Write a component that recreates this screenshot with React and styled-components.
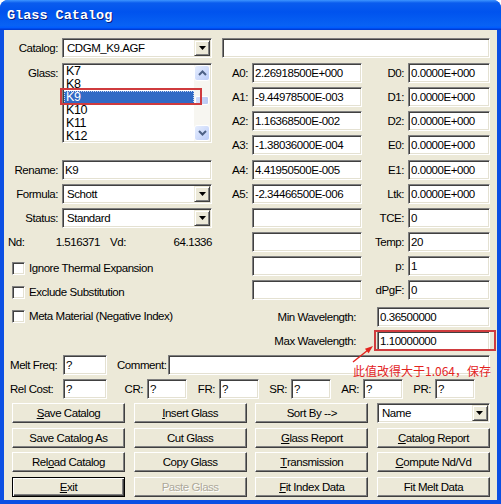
import React from "react";
import styled, { createGlobalStyle, css } from "styled-components";

const GlobalStyle = createGlobalStyle`
	html, body {
		margin: 0;
		padding: 0;
		background: #fff;
	}
	body {
		font-family: "Liberation Sans", Arial, sans-serif;
		font-size: 11.5px;
		letter-spacing: -0.45px;
		color: #000;
	}
`;

const sunken = css`
	box-sizing: border-box;
	background: #fff;
	border: 1px solid;
	border-color: #808080 #fff #fff #808080;
	box-shadow: inset 1px 1px #404040, inset -1px -1px #e4e1d2;
`;

const raised = css`
	box-sizing: border-box;
	background: #ece9d8;
	border: 1px solid;
	border-color: #fff #404040 #404040 #fff;
	box-shadow: inset -1px -1px #808080;
`;

const Window = styled.div`
	width: 501px;
	height: 504px;
	display: flex;
	flex-direction: column;
	background: #0b4fe3;
	border-radius: 8px 8px 0 0;
	overflow: hidden;
`;

const TitleBar = styled.div`
	height: 30px;
	flex: none;
	display: flex;
	align-items: center;
	padding-left: 7px;
	background: linear-gradient(
		180deg,
		#3d95ff 0%,
		#0a5cee 10%,
		#0053ee 40%,
		#0862f4 85%,
		#005bff 93%,
		#003dd7 97%,
		#003dd7 100%
	);
	color: #fff;
	font: bold 13.5px "Liberation Mono", monospace;
	letter-spacing: 0;
	text-shadow: 1px 1px 0 #0a1b7a;
`;

const Client = styled.div`
	position: relative;
	flex: 1;
	margin: 0 4px 4px;
	padding: 8px 3px 0 4px;
	background: #ece9d8;
	display: flex;
	flex-direction: column;
`;

const FormGrid = styled.div`
	display: grid;
	grid-template-columns: 50px 150px 32px 110px 38px 82px;
	grid-template-rows: 25px 24px 24px 24px 25px 24px 24px 24px 24px 24px 27px 24px 24px;
	column-gap: 4px;
	align-items: start;
`;

const FieldLabel = styled.div`
	grid-area: ${(p) => p.$at};
	text-align: right;
	line-height: 20px;
	white-space: nowrap;
`;

const TextBox = styled.div`
	${sunken};
	grid-area: ${(p) => p.$at || "auto"};
	height: 20px;
	width: ${(p) => (p.$w ? `${p.$w}px` : "auto")};
	flex: ${(p) => (p.$w ? "none" : "1")};
	margin-left: ${(p) => p.$ml || 0}px;
	margin-right: ${(p) => p.$mr || 0}px;
	padding: 0 2px 0 2px;
	line-height: 18px;
	white-space: nowrap;
	overflow: hidden;
`;

const Combo = styled.div`
	${sunken};
	grid-area: ${(p) => p.$at || "auto"};
	height: 20px;
	display: flex;
	align-items: center;
	padding: 1px;
`;

const ComboText = styled.span`
	flex: 1;
	padding-left: 3px;
	line-height: 16px;
	white-space: nowrap;
`;

const DropButton = styled.span`
	${raised};
	width: 16px;
	height: 16px;
	border-color: #ece9d8 #404040 #404040 #ece9d8;
	box-shadow: inset 1px 1px #fff, inset -1px -1px #808080;
	display: flex;
	align-items: center;
	justify-content: center;
`;

const ListBox = styled.div`
	${sunken};
	grid-area: 2 / 2 / 6 / 3;
	height: 80px;
	display: flex;
	padding: 1px;
	overflow: hidden;
`;

const Items = styled.div`
	flex: 1;
	overflow: hidden;
	font-size: 12.5px;
`;

const Item = styled.div`
	height: 13px;
	line-height: 13px;
	padding-left: 2px;

	${(p) =>
		p.$selected &&
		css`
			background: #316ac5;
			color: #fff;
			outline: 1px dotted #c9d7f2;
			outline-offset: -1px;
		`}
`;

const ScrollBar = styled.div`
	width: 16px;
	display: flex;
	flex-direction: column;
	background: #f7f6f1;
`;

const ScrollButton = styled.div`
	height: 16px;
	box-sizing: border-box;
	border: 1px solid #fff;
	border-radius: 3px;
	background: linear-gradient(135deg, #e6eefe, #bccdf9);
	display: flex;
	align-items: center;
	justify-content: center;
`;

const Track = styled.div`
	flex: 1;
`;

const Thumb = styled.div`
	margin: ${(p) => p.$top}px 1px 0;
	height: 7px;
	border-radius: 2px;
	background: linear-gradient(90deg, #d2ddfb, #b9c9f3);
	border: 1px solid #fff;
`;

const NdRow = styled.div`
	grid-area: 9 / 1 / 10 / 3;
	display: grid;
	grid-template-columns: 92px 1fr;
	column-gap: 10px;
	line-height: 20px;
`;

const Pair = styled.div`
	display: flex;
	justify-content: space-between;
`;

const CheckList = styled.div`
	grid-area: 10 / 1 / 14 / 3;
	display: flex;
	flex-direction: column;
	padding-left: 4px;
`;

const CheckRow = styled.div`
	height: 24px;
	display: flex;
	align-items: center;
	gap: 4px;
	white-space: nowrap;
`;

const CheckBox = styled.span`
	${sunken};
	width: 13px;
	height: 13px;
	flex: none;
`;

const WaveRow = styled.div`
	grid-area: ${(p) => p.$at};
	display: flex;
	justify-content: flex-end;
	align-items: center;
	gap: 21px;
	height: 20px;
`;

const InfoRow = styled.div`
	display: flex;
	align-items: center;
	height: 20px;
	margin-top: ${(p) => p.$gap || 0}px;
	padding-left: 2px;
`;

const RowLabel = styled.span`
	flex: none;
	width: ${(p) => p.$w}px;
	margin-left: ${(p) => p.$ml || 0}px;
	white-space: nowrap;
`;

const Ratios = styled.div`
	display: flex;
	margin-left: 8px;
`;

const Ratio = styled.div`
	width: 72px;
	display: flex;
	align-items: center;
	gap: 4px;
`;

const RatioLabel = styled.span`
	width: 28px;
	text-align: right;
`;

const ButtonGrid = styled.div`
	display: grid;
	grid-template-columns: repeat(4, 113px);
	grid-auto-rows: 20px;
	column-gap: 8.67px;
	row-gap: 4.6px;
	margin-top: 4px;
	padding-left: 4px;
`;

const Button = styled.div`
	${raised};
	display: flex;
	align-items: center;
	justify-content: center;
	white-space: nowrap;
	color: ${(p) => (p.$disabled ? "#aca899" : "#000")};
	text-shadow: ${(p) => (p.$disabled ? "1px 1px 0 #fff" : "none")};

	${(p) =>
		p.$default &&
		css`
			border: 1px solid #000;
			box-shadow: inset 1px 1px #fff, inset -1px -1px #404040, inset -2px -2px #808080;
		`}
`;

const Mark = styled.div`
	position: absolute;
	left: ${(p) => p.$x}px;
	top: ${(p) => p.$y}px;
	width: ${(p) => p.$w}px;
	height: ${(p) => p.$h}px;
	box-sizing: border-box;
	border: 2px solid #cf3b3e;
	pointer-events: none;
`;

const Arrow = styled.svg`
	position: absolute;
	left: 346px;
	top: 312px;
`;

const Note = styled.div`
	position: absolute;
	left: 349px;
	top: 334px;
	font: 12px/14px "Noto Sans CJK SC", sans-serif;
	letter-spacing: 0;
	color: #e3241f;
	white-space: nowrap;
`;

const DownTriangle = () => (
	<svg width="7" height="4" viewBox="0 0 7 4">
		<polygon points="0,0 7,0 3.5,4" fill="#000" />
	</svg>
);

const Chevron = ({ up }) => (
	<svg width="9" height="6" viewBox="0 0 9 6">
		<polyline
			points={up ? "1,5 4.5,1.5 8,5" : "1,1 4.5,4.5 8,1"}
			fill="none"
			stroke="#4d6185"
			strokeWidth="2"
		/>
	</svg>
);

const ComboBox = ({ at, children }) => (
	<Combo $at={at}>
		<ComboText>{children}</ComboText>
		<DropButton>
			<DownTriangle />
		</DropButton>
	</Combo>
);

const glasses = ["K7", "K8", "K9", "K10", "K11", "K12"];

const aRows = [
	["A0:", "2.26918500E+000"],
	["A1:", "-9.44978500E-003"],
	["A2:", "1.16368500E-002"],
	["A3:", "-1.38036000E-004"],
	["A4:", "4.41950500E-005"],
	["A5:", "-2.34466500E-006"],
	["", ""],
	["", ""],
	["", ""],
	["", ""],
];

const dRows = [
	["D0:", "0.0000E+000"],
	["D1:", "0.0000E+000"],
	["D2:", "0.0000E+000"],
	["E0:", "0.0000E+000"],
	["E1:", "0.0000E+000"],
	["Ltk:", "0.0000E+000"],
	["TCE:", "0"],
	["Temp:", "20"],
	["p:", "1"],
	["dPgF:", "0"],
];

const ratios = ["CR:", "FR:", "SR:", "AR:", "PR:"];

const App = () => {
	return (
		<>
			<GlobalStyle />
			<Window>
				<TitleBar>Glass Catalog</TitleBar>
				<Client>
					<FormGrid>
						<FieldLabel $at="1 / 1">Catalog:</FieldLabel>
						<ComboBox at="1 / 2">CDGM_K9.AGF</ComboBox>
						<TextBox $at="1 / 3 / 2 / 7" $ml={6} />

						<FieldLabel $at="2 / 1">Glass:</FieldLabel>
						<ListBox>
							<Items>
								{glasses.map((g) => (
									<Item key={g} $selected={g === "K9"}>
										{g}
									</Item>
								))}
							</Items>
							<ScrollBar>
								<ScrollButton>
									<Chevron up />
								</ScrollButton>
								<Track>
									<Thumb $top={15} />
								</Track>
								<ScrollButton>
									<Chevron />
								</ScrollButton>
							</ScrollBar>
						</ListBox>

						<FieldLabel $at="6 / 1">Rename:</FieldLabel>
						<TextBox $at="6 / 2">K9</TextBox>
						<FieldLabel $at="7 / 1">Formula:</FieldLabel>
						<ComboBox at="7 / 2">Schott</ComboBox>
						<FieldLabel $at="8 / 1">Status:</FieldLabel>
						<ComboBox at="8 / 2">Standard</ComboBox>

						<NdRow>
							<Pair>
								<span>Nd:</span>
								<span>1.516371</span>
							</Pair>
							<Pair>
								<span>Vd:</span>
								<span>64.1336</span>
							</Pair>
						</NdRow>

						<CheckList>
							<CheckRow>
								<CheckBox />
								Ignore Thermal Expansion
							</CheckRow>
							<CheckRow>
								<CheckBox />
								Exclude Substitution
							</CheckRow>
							<CheckRow>
								<CheckBox />
								Meta Material (Negative Index)
							</CheckRow>
						</CheckList>

						{aRows.map(([label, value], i) => (
							<React.Fragment key={`a${i}`}>
								{label && <FieldLabel $at={`${i + 2} / 3`}>{label}</FieldLabel>}
								<TextBox $at={`${i + 2} / 4`}>{value}</TextBox>
							</React.Fragment>
						))}

						{dRows.map(([label, value], i) => (
							<React.Fragment key={`d${i}`}>
								<FieldLabel $at={`${i + 2} / 5`}>{label}</FieldLabel>
								<TextBox $at={`${i + 2} / 6`}>{value}</TextBox>
							</React.Fragment>
						))}

						<WaveRow $at="12 / 4 / 13 / 7">
							<span>Min Wavelength:</span>
							<TextBox $w={113}>0.36500000</TextBox>
						</WaveRow>
						<WaveRow $at="13 / 4 / 14 / 7">
							<span>Max Wavelength:</span>
							<TextBox $w={113}>1.10000000</TextBox>
						</WaveRow>
					</FormGrid>

					<InfoRow>
						<RowLabel $w={53}>Melt Freq:</RowLabel>
						<TextBox $w={44}>?</TextBox>
						<RowLabel $w={51} $ml={10}>
							Comment:
						</RowLabel>
						<TextBox $mr={4} />
					</InfoRow>

					<InfoRow $gap={4}>
						<RowLabel $w={53}>Rel Cost:</RowLabel>
						<TextBox $w={44}>?</TextBox>
						<Ratios>
							{ratios.map((r) => (
								<Ratio key={r}>
									<RatioLabel>{r}</RatioLabel>
									<TextBox $w={40}>?</TextBox>
								</Ratio>
							))}
						</Ratios>
					</InfoRow>

					<ButtonGrid>
						<Button>
							<u>S</u>ave Catalog
						</Button>
						<Button>
							<u>I</u>nsert Glass
						</Button>
						<Button>Sort By --&gt;</Button>
						<ComboBox>Name</ComboBox>

						<Button>Save Catalog As</Button>
						<Button>Cut Glass</Button>
						<Button>
							<u>G</u>lass Report
						</Button>
						<Button>
							<u>C</u>atalog Report
						</Button>

						<Button>
							Rel<u>o</u>ad Catalog
						</Button>
						<Button>Copy Glass</Button>
						<Button>
							<u>T</u>ransmission
						</Button>
						<Button>
							<u>C</u>ompute Nd/Vd
						</Button>

						<Button $default>
							<u>E</u>xit
						</Button>
						<Button $disabled>Paste Glass</Button>
						<Button>
							<u>F</u>it Index Data
						</Button>
						<Button>Fit Melt Data</Button>
					</ButtonGrid>

					<Mark $x={56} $y={58} $w={142} $h={17} />
					<Mark $x={370} $y={300} $w={122} $h={21} />
					<Arrow width="30" height="30" viewBox="0 0 30 30">
						<line x1="3" y1="20" x2="18" y2="8" stroke="#e3241f" strokeWidth="1.5" />
						<polygon points="23,4 18.6,11.3 14.9,6.7" fill="#e3241f" />
					</Arrow>
					<Note>此值改得大于1.064，保存</Note>
				</Client>
			</Window>
		</>
	);
};

export default App;
